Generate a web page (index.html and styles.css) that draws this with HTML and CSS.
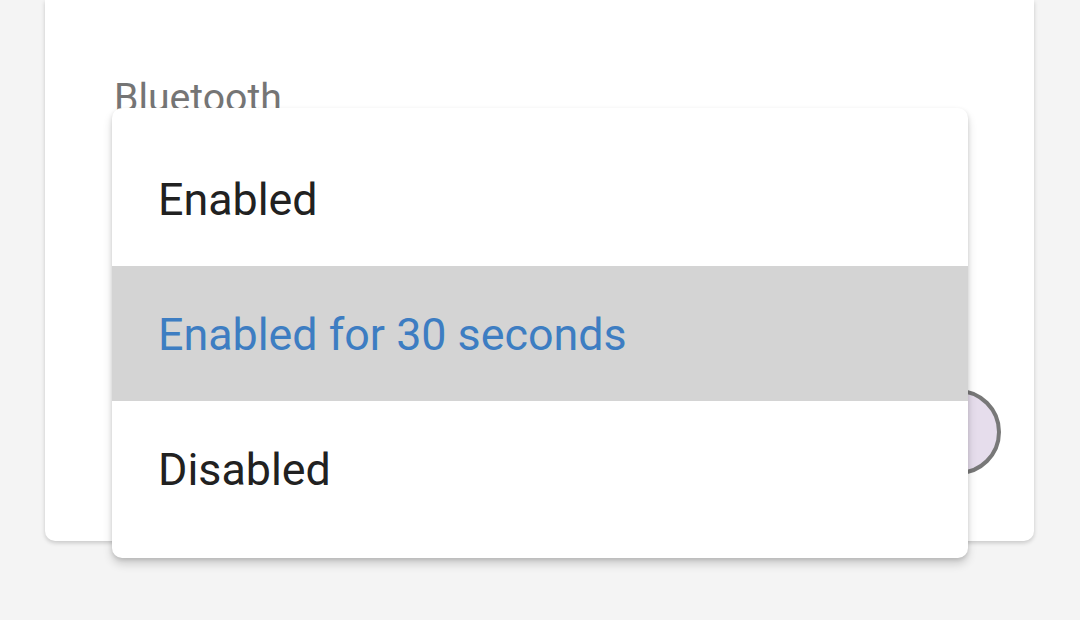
FILE: index.html
```html
<!DOCTYPE html>
<html>
<head>
<meta charset="utf-8">
<link rel="stylesheet" href="styles.css">
</head>
<body>
<div class="card">
  <div class="label">Bluetooth</div>
  <div class="row">
    <div class="radio"></div>
  </div>
</div>
<div class="menu">
  <div class="item">Enabled</div>
  <div class="item selected">Enabled for 30 seconds</div>
  <div class="item">Disabled</div>
</div>
</body>
</html>
```
FILE: styles.css
```css
html, body {
  margin: 0;
  padding: 0;
}
body {
  background: #f4f4f4;
  width: 1080px;
  height: 620px;
  overflow: hidden;
  position: relative;
  font-family: Roboto, "Noto Sans", sans-serif;
}
.card {
  margin-left: 45px;
  width: 989px;
  height: 541px;
  background: #ffffff;
  border-radius: 0 0 10px 10px;
  box-shadow: 0 2px 4px rgba(0,0,0,0.18);
  box-sizing: border-box;
  padding-top: 75px;
}
.label {
  padding-left: 69px;
  font-size: 39.2px;
  line-height: 46px;
  color: #757575;
}
.row {
  display: flex;
  justify-content: flex-end;
  padding-right: 33.5px;
  margin-top: 267.5px;
}
.radio {
  width: 78px;
  height: 78px;
  border: 4.5px solid #787878;
  border-radius: 50%;
  background: #e6ddec;
}
.menu {
  position: absolute;
  left: 112px;
  top: 108px;
  width: 856px;
  padding: 22.5px 0;
  background: #ffffff;
  border-radius: 10px;
  box-shadow: 0 6px 10px rgba(0,0,0,0.16), 0 2px 4px rgba(0,0,0,0.12);
}
.item {
  height: 135px;
  box-sizing: border-box;
  padding-top: 3px;
  display: flex;
  align-items: center;
  padding-left: 46px;
  font-size: 44.8px;
  color: #212121;
}
.item.selected {
  background: #d4d4d4;
  color: #3d7dc2;
}
```
